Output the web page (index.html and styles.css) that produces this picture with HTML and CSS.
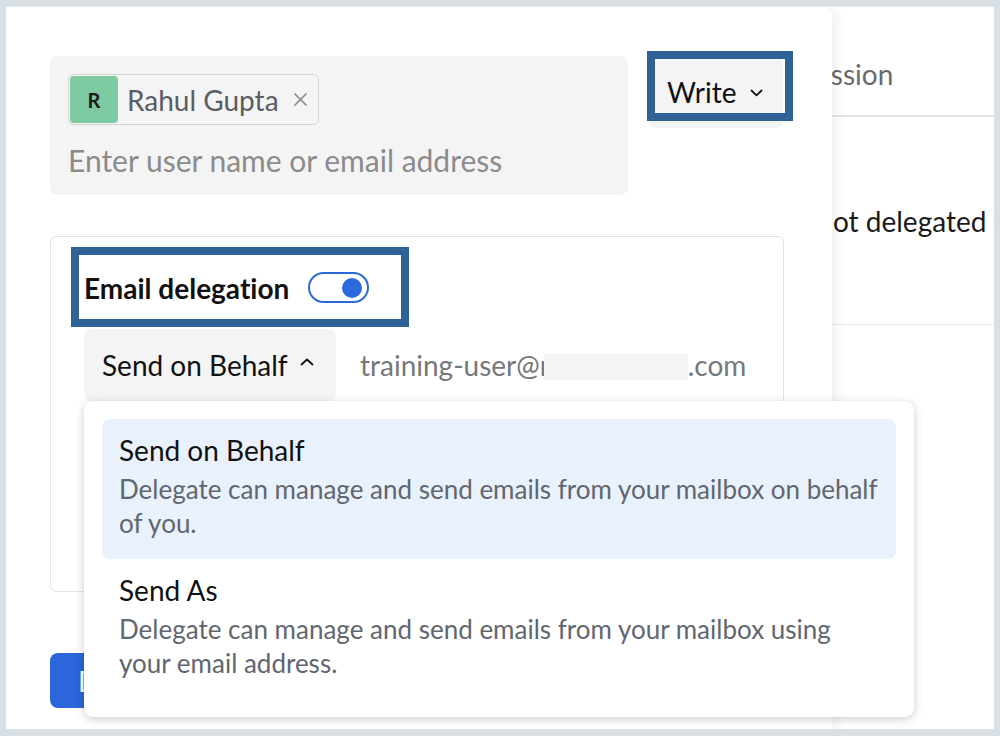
FILE: index.html
```html
<!DOCTYPE html>
<html lang="en">
<head>
<meta charset="utf-8">
<title>Email delegation</title>
<link rel="stylesheet" href="styles.css">
</head>
<body>
<div class="screen">
  <div class="page">
    <div class="bg">
      <div class="bg-head"><span class="bg-head-text">Permission</span></div>
      <div class="bg-row"><span class="bg-row-text">Not delegated to anyone</span></div>
    </div>

    <div class="modal">
      <div class="top-row">
        <div class="recipients">
          <div class="chip">
            <span class="avatar">R</span>
            <span class="chip-name">Rahul Gupta</span>
            <svg class="chip-x" width="15" height="15" viewBox="0 0 15 15"><path d="M1.5 1.5 L13.5 13.5 M13.5 1.5 L1.5 13.5" stroke="#8a8a8a" stroke-width="1.6" fill="none"/></svg>
          </div>
          <div class="placeholder">Enter user name or email address</div>
        </div>
        <div class="perm-btn">
          <span>Write</span>
          <svg class="chev" width="13" height="8" viewBox="0 0 13 8"><path d="M1.5 1.5 L6.5 6.3 L11.5 1.5" stroke="#111" stroke-width="1.8" fill="none" stroke-linecap="round" stroke-linejoin="round"/></svg>
          <span class="annot annot-write"></span>
        </div>
      </div>

      <div class="card">
        <div class="card-head">
          <span class="card-title">Email delegation</span>
          <span class="toggle"><span class="knob"></span></span>
        </div>
        <span class="annot annot-deleg"></span>
        <div class="mode-row">
          <div class="mode-wrap">
            <div class="mode-btn">
              <span>Send on Behalf</span>
              <svg class="chev-up" width="14" height="8" viewBox="0 0 14 8"><path d="M1.5 6.5 L7 1.5 L12.5 6.5" stroke="#111" stroke-width="1.8" fill="none" stroke-linecap="round" stroke-linejoin="round"/></svg>
            </div>
            <div class="menu">
              <div class="menu-item active">
                <div class="item-title">Send on Behalf</div>
                <div class="item-desc">Delegate can manage and send emails from your mailbox on behalf of you.</div>
              </div>
              <div class="menu-item">
                <div class="item-title">Send As</div>
                <div class="item-desc">Delegate can manage and send emails from your mailbox using your email address.</div>
              </div>
            </div>
          </div>
          <div class="email">training-user@<span class="clip">r</span><span class="redact"></span>.com</div>
        </div>
      </div>

      <button class="primary">Delegate</button>
    </div>
  </div>
</div>
</body>
</html>
```

FILE: styles.css
```css
* { box-sizing: border-box; }

html, body {
  margin: 0;
  padding: 0;
}

body {
  font-family: Lato, "Liberation Sans", sans-serif;
  color: #111;
  font-variant-ligatures: none;
  font-feature-settings: "liga" 0, "dlig" 0, "clig" 0;
}

.screen {
  width: 1000px;
  height: 736px;
  background: #d8e0e6;
  padding: 6px 6px 7px 6px;
}

.page {
  position: relative;
  height: 723px;
  background: #fff;
  overflow: hidden;
  border-top: 1px solid #e4e9ed;
}

/* background page behind the modal */
.bg {
  margin-left: 740px;
}

.bg-head {
  height: 110px;
  border-bottom: 2px solid #e5e5e5;
  padding-top: 50px;
  padding-left: 14px;
}

.bg-head-text {
  font-size: 28px;
  color: #6a6a6a;
  white-space: nowrap;
}

.bg-row {
  height: 208px;
  border-bottom: 1px solid #ececec;
  padding-top: 87px;
  padding-left: 66px;
  white-space: nowrap;
}

.bg-row-text {
  font-size: 28px;
  color: #1a1a1a;
}

/* modal */
.modal {
  position: absolute;
  left: 0;
  top: 0;
  bottom: 0;
  width: 826px;
  background: #fff;
  border-top-right-radius: 9px;
  box-shadow: 3px 0 14px rgba(0, 0, 0, 0.07);
  padding: 49px 0 0 44px;
}

.top-row {
  display: flex;
  align-items: flex-start;
  gap: 20px;
}

.recipients {
  width: 578px;
  height: 139px;
  background: #f4f4f4;
  border-radius: 8px;
  padding: 18px;
}

.chip {
  display: inline-flex;
  align-items: center;
  height: 51px;
  border: 1px solid #d3d3d3;
  border-radius: 5px;
  padding: 1px 10px 1px 1px;
}

.avatar {
  width: 48px;
  height: 47px;
  background: #7ecba1;
  border-radius: 4px;
  display: flex;
  align-items: center;
  justify-content: center;
  font-weight: 700;
  font-size: 20px;
  color: #1b1b1b;
}

.chip-name {
  margin-left: 9px;
  font-size: 28px;
  color: #5a5d63;
}

.chip-x {
  margin-left: 14px;
}

.placeholder {
  margin-top: 18px;
  font-size: 30px;
  line-height: 34px;
  color: #8b8b8b;
  white-space: nowrap;
}

.perm-btn {
  position: relative;
  width: 135px;
  height: 72px;
  background: #f4f4f4;
  border-radius: 8px;
  padding-left: 19px;
  display: flex;
  align-items: center;
  font-size: 28px;
  color: #111;
}

.chev {
  margin-left: 14px;
  margin-top: 2px;
}

/* annotation rectangles drawn over the UI */
.annot {
  position: absolute;
  border: 8px solid #2f6398;
  pointer-events: none;
}

.annot-write {
  left: -1px;
  top: -5px;
  width: 146px;
  height: 70px;
}

.annot-deleg {
  left: 20px;
  top: 10px;
  width: 338px;
  height: 80px;
}

.card {
  position: relative;
  margin-top: 41px;
  width: 734px;
  height: 356px;
  border: 1px solid #e2e2e2;
  border-radius: 6px;
  padding: 35px 33px 0 33px;
}

.card-head {
  display: flex;
  align-items: center;
  gap: 19px;
  height: 31px;
}

.card-title {
  font-weight: 700;
  font-size: 28px;
  color: #111;
}

.toggle {
  width: 61px;
  height: 31px;
  border: 2px solid #2c68d6;
  border-radius: 16px;
  display: flex;
  align-items: center;
  justify-content: flex-end;
  padding-right: 5px;
}

.knob {
  width: 20px;
  height: 20px;
  border-radius: 50%;
  background: #2c68de;
}

.mode-row {
  margin-top: 26px;
  display: flex;
  align-items: center;
  gap: 24px;
}

.mode-wrap {
  position: relative;
}

.mode-btn {
  width: 252px;
  height: 72px;
  background: #f4f4f4;
  border-radius: 8px;
  padding-left: 18px;
  display: flex;
  align-items: center;
  font-size: 28px;
  color: #111;
}

.chev-up {
  margin-left: 12px;
  margin-top: -6px;
}

.email {
  font-size: 28px;
  color: #76787c;
  white-space: nowrap;
  display: flex;
  align-items: center;
}

.clip {
  display: inline-block;
  width: 4px;
  overflow: hidden;
}

.redact {
  display: inline-block;
  width: 144px;
  height: 26px;
  background: #f3f4f6;
  margin-top: 4px;
}

.menu {
  position: absolute;
  left: 0;
  top: 72px;
  width: 830px;
  background: #fff;
  border-radius: 9px;
  box-shadow: 0 2px 10px rgba(0, 0, 0, 0.2);
  padding: 18px;
  z-index: 2;
}

.menu-item {
  border-radius: 8px;
  padding: 14px 17px 19px 17px;
}

.menu-item.active {
  background: #e9f1fd;
}

.item-title {
  font-size: 28px;
  line-height: 34px;
  color: #111;
}

.item-desc {
  margin-top: 5px;
  font-size: 26px;
  line-height: 34px;
  color: #62666e;
}

.primary {
  display: block;
  margin-top: 61px;
  width: 160px;
  height: 55px;
  border: none;
  border-radius: 8px;
  background: #2b66db;
  color: #fff;
  font-family: inherit;
  font-size: 28px;
  text-align: left;
  padding-left: 28px;
}
```
